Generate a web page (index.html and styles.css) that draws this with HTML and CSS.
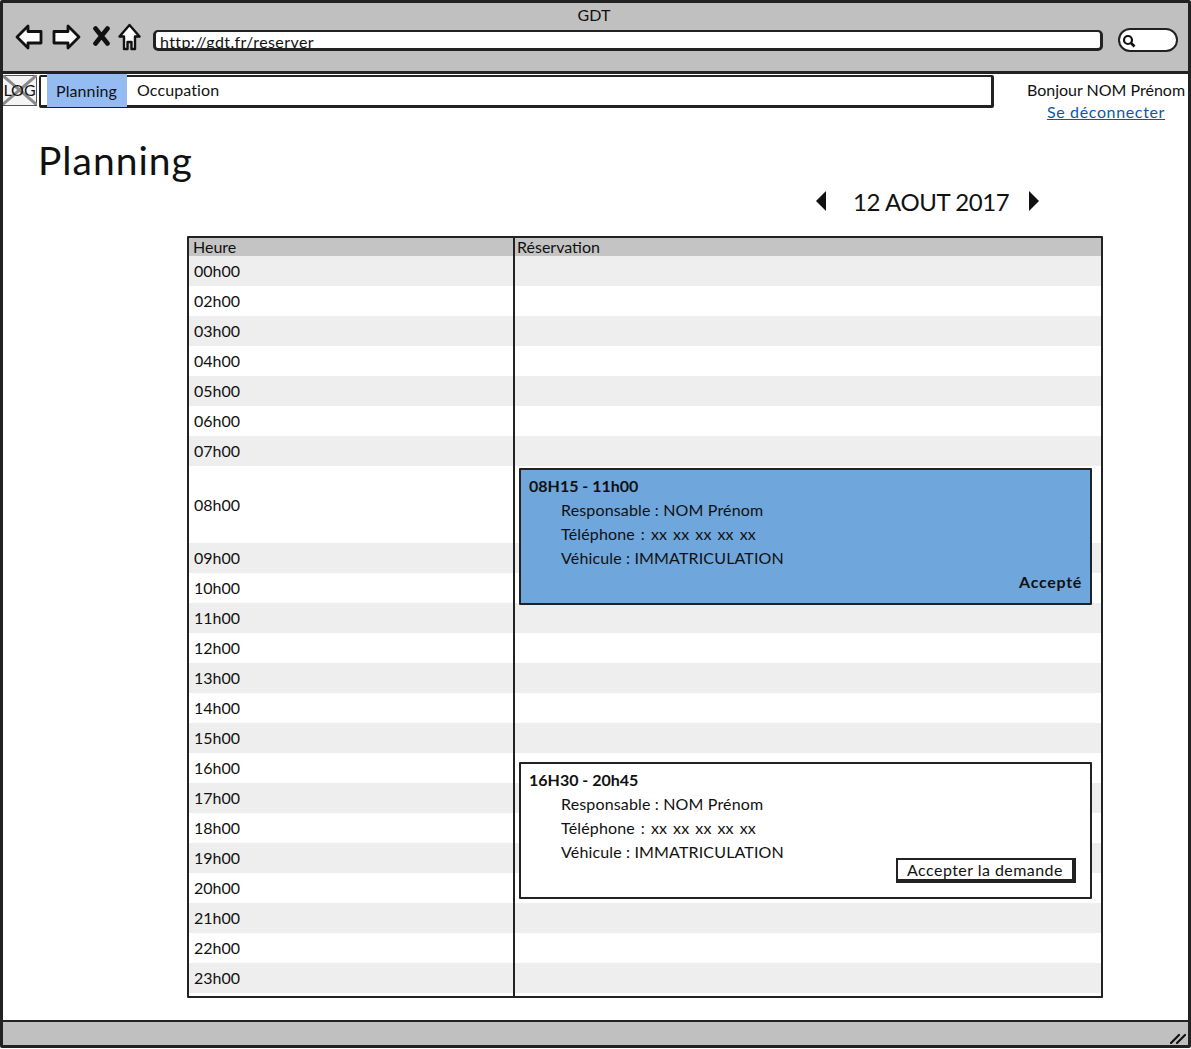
FILE: index.html
```html
<!DOCTYPE html>
<html lang="fr">
<head>
<meta charset="UTF-8">
<meta name="viewport" content="width=device-width, initial-scale=1.0">
<title>GDT</title>
<link rel="stylesheet" href="styles.css">
</head>
<body>

<div class="window">
    <header class="browser">
        <div class="browser-title">GDT</div>
        <div class="browser-tools">
            <svg class="icon icon-back" width="28" height="26" viewBox="0 0 28 26"><path d="M2 13 L13 2 L13 7.500 L26 7.500 L26 19 L13 19 L13 24 Z" fill="#fff" stroke="#111" stroke-width="2.800" stroke-linejoin="round"/></svg>
            <svg class="icon icon-forward" width="29" height="26" viewBox="0 0 29 26"><path d="M27 13 L16 2 L16 7.500 L2 7.500 L2 19 L16 19 L16 24 Z" fill="#fff" stroke="#111" stroke-width="2.800" stroke-linejoin="round"/></svg>
            <svg class="icon icon-stop" width="17" height="20" viewBox="0 0 17 20"><path d="M2.500 2.500 L14.500 17.500 M14.500 2.500 L2.500 17.500" fill="none" stroke="#111" stroke-width="4.600" stroke-linecap="round"/></svg>
            <svg class="icon icon-home" width="23" height="28" viewBox="0 0 23 28"><path d="M11.500 2 L21.500 13.500 L17 13.500 L17 26 L13.500 26 L13.500 19 L9.500 19 L9.500 26 L6 26 L6 13.500 L1.500 13.500 Z" fill="#fff" stroke="#111" stroke-width="2.400" stroke-linejoin="round"/></svg>
            <div class="address"><span class="address-text">http://gdt.fr/reserver</span></div>
            <div class="search">
                <svg width="14" height="14" viewBox="0 0 14 14"><circle cx="6" cy="6" r="4" fill="none" stroke="#111" stroke-width="2.200"/><path d="M9 9 L12.500 12.500" stroke="#111" stroke-width="2.600"/></svg>
            </div>
        </div>
    </header>

    <main class="page">
        <div class="top-row">
            <div class="logo">
                <svg class="logo-cross" width="35" height="30" viewBox="0 0 35 30"><path d="M0 0 L35 30 M35 0 L0 30" stroke="#8a8a8a" stroke-width="3"/></svg>
                <span class="logo-text">LOG</span>
            </div>
            <nav class="nav">
                <a class="nav-item nav-active">Planning</a>
                <a class="nav-item">Occupation</a>
            </nav>
            <div class="user">
                <div>Bonjour NOM Prénom</div>
                <a class="logout">Se déconnecter</a>
            </div>
        </div>

        <h1>Planning</h1>

        <div class="date-nav">
            <span class="tri tri-left"></span>
            <span class="date-label">12 AOUT 2017</span>
            <span class="tri tri-right"></span>
        </div>

        <div class="table-wrap">
            <div class="table" id="planning">
                <div class="row row-head"><div class="cell-hour">Heure</div><div class="cell-res">Réservation</div></div>
            </div>
            <div class="divider"></div>

            <div class="event event-ok">
                <div class="event-title">08H15 - 11h00</div>
                <div class="event-line">Responsable : NOM Prénom</div>
                <div class="event-line event-phone">Téléphone : xx xx xx xx xx</div>
                <div class="event-line">Véhicule : IMMATRICULATION</div>
                <div class="event-status">Accepté</div>
            </div>

            <div class="event event-new">
                <div class="event-title">16H30 - 20h45</div>
                <div class="event-line">Responsable : NOM Prénom</div>
                <div class="event-line event-phone">Téléphone : xx xx xx xx xx</div>
                <div class="event-line">Véhicule : IMMATRICULATION</div>
                <button class="accept">Accepter la demande</button>
            </div>
        </div>
    </main>

    <footer class="status">
        <svg class="grip" width="16" height="12" viewBox="0 0 16 12"><path d="M1 11 L9 3 M7 11 L15 3" stroke="#111" stroke-width="2.200" stroke-linecap="round"/></svg>
    </footer>
</div>

<script>
    const hours = ['00', '02', '03', '04', '05', '06', '07', '08', '09', '10', '11', '12',
        '13', '14', '15', '16', '17', '18', '19', '20', '21', '22', '23'];
    const planning = document.getElementById('planning');

    // Render hour rows
    hours.forEach(hour => {
        const tall = hour === '08' ? ' row-tall' : '';
        planning.insertAdjacentHTML('beforeend', `
            <div class="row${tall}">
                <div class="cell-hour">${hour}h00</div>
                <div class="cell-res"></div>
            </div>
        `);
    });
</script>

</body>
</html>
```

FILE: styles.css
```css
html, body {
    margin: 0;
    padding: 0;
}
body {
    font-family: "Lato", "Liberation Sans", sans-serif;
    font-size: 16px;
    color: #111;
    background-color: #fff;
}
.window {
    box-sizing: border-box;
    width: 1191px;
    height: 1048px;
    border: 3px solid #222;
    border-radius: 2px;
    display: flex;
    flex-direction: column;
    overflow: hidden;
}

/* browser chrome */
.browser {
    height: 71px;
    flex-shrink: 0;
    box-sizing: border-box;
    background-color: #c0c0c0;
    border-bottom: 3px solid #222;
}
.browser-title {
    text-align: center;
    height: 20px;
    line-height: 20px;
    padding-top: 2px;
    padding-right: 3px;
}
.browser-tools {
    display: flex;
    align-items: center;
    height: 34px;
    margin-top: -2px;
    padding-left: 12px;
}
.icon {
    flex-shrink: 0;
    margin-bottom: 6px;
}
.icon-forward {
    margin-left: 9px;
}
.icon-stop {
    margin-left: 12px;
    margin-bottom: 8px;
}
.icon-home {
    margin-left: 8px;
}
.address {
    box-sizing: border-box;
    width: 950px;
    height: 21px;
    margin-left: 12px;
    margin-top: 1px;
    padding-left: 4px;
    background-color: #fff;
    border: 3px solid #222;
    border-top-width: 2px;
    border-radius: 5px;
    overflow: hidden;
}
.address-text {
    display: block;
    line-height: 20px;
    letter-spacing: 0.400px;
}
.search {
    box-sizing: border-box;
    width: 60px;
    height: 24px;
    margin-left: 15px;
    padding: 2px 0 0 2px;
    background-color: #fff;
    border: 2.500px solid #222;
    border-radius: 12px;
}

/* page */
.page {
    flex: 1;
    min-height: 0;
    box-sizing: border-box;
}
.top-row {
    display: flex;
    height: 34px;
}
.logo {
    position: relative;
    box-sizing: border-box;
    flex-shrink: 0;
    width: 35px;
    height: 31px;
    margin: 1px 0 0 -1px;
    border: 1px solid #555;
    text-align: center;
    line-height: 28px;
    background-color: #f4f4f4;
}
.logo-cross {
    position: absolute;
    left: -1px;
    top: -1px;
}
.logo-text {
    position: relative;
}
.nav {
    box-sizing: border-box;
    display: flex;
    align-items: stretch;
    width: 955px;
    height: 33px;
    margin: 1px 0 0 2px;
    padding-left: 6px;
    border: 3px solid #222;
    border-top-width: 2px;
    border-left-width: 2px;
    border-radius: 2px;
    background-color: #fff;
}
.nav-item {
    display: flex;
    align-items: center;
    padding: 0 9px 3px 10px;
    letter-spacing: 0.100px;
}
.nav-active {
    margin: -3px 0 -2px 0;
    padding: 0 10px 0 9px;
    background-color: #94bcf3;
}
.user {
    flex: 1;
    margin-left: 30px;
    text-align: center;
    padding-top: 5px;
    line-height: 22px;
    white-space: nowrap;
}
.logout {
    color: #0b58a6;
    text-decoration: underline;
    letter-spacing: 0.650px;
}
h1 {
    margin: 30px 0 0 35px;
    font-size: 39px;
    font-weight: 400;
    line-height: 44px;
    letter-spacing: 1px;
}
.date-nav {
    display: flex;
    align-items: center;
    height: 30px;
    margin: 4px 0 0 813px;
}
.date-label {
    font-size: 24px;
    letter-spacing: -0.400px;
    margin: 0 20px 0 27px;
}
.tri {
    width: 0;
    height: 0;
    border-top: 10px solid transparent;
    border-bottom: 10px solid transparent;
}
.tri-left {
    border-right: 10px solid #111;
}
.tri-right {
    border-left: 10px solid #111;
}

/* table */
.table-wrap {
    position: relative;
    box-sizing: border-box;
    width: 916px;
    height: 762px;
    margin: 20px 0 0 184px;
    border: 2.500px solid #222;
    border-top-width: 2px;
    border-radius: 1px;
}
.row {
    display: grid;
    grid-template-columns: 325px 1fr;
    height: 30px;
    align-items: center;
}
.row:nth-child(even) {
    background-color: #eee;
}
.row-head {
    height: 18px;
    background-color: #c4c4c4;
    line-height: 18px;
}
.row-tall {
    height: 77px;
}
.cell-hour {
    padding: 0 0 1px 5px;
}
.row-head .cell-hour {
    padding: 0 0 0 4px;
}
.cell-res {
    padding-left: 3px;
}
.divider {
    position: absolute;
    left: 324px;
    top: 0;
    bottom: 0;
    width: 2px;
    background-color: #222;
}
.event {
    position: absolute;
    box-sizing: border-box;
    left: 330px;
    width: 573px;
    height: 137px;
    padding: 4px 8px;
    border: 2.500px solid #222;
    border-radius: 1px;
    letter-spacing: 0.150px;
}
.event-ok {
    top: 230px;
    background-color: #6fa6dc;
}
.event-new {
    top: 524px;
    background-color: #fff;
}
.event-title {
    font-weight: 700;
    line-height: 24px;
    letter-spacing: 0;
}
.event-line {
    line-height: 24px;
    padding-left: 32px;
}
.event-phone {
    word-spacing: 1.700px;
}
.event-status {
    font-weight: 700;
    line-height: 24px;
    text-align: right;
    letter-spacing: 0.700px;
}
.accept {
    position: absolute;
    right: 14px;
    bottom: 14px;
    box-sizing: border-box;
    width: 180px;
    height: 25px;
    padding: 0 0 2px 0;
    font: inherit;
    letter-spacing: 0.450px;
    color: #111;
    background-color: #fff;
    border: 2px solid #222;
    border-right-width: 4px;
    border-bottom-width: 4px;
}

/* status bar */
.status {
    position: relative;
    height: 23px;
    flex-shrink: 0;
    background-color: #c0c0c0;
    border-top: 2.500px solid #222;
}
.grip {
    position: absolute;
    right: 2px;
    bottom: 1px;
}
```
